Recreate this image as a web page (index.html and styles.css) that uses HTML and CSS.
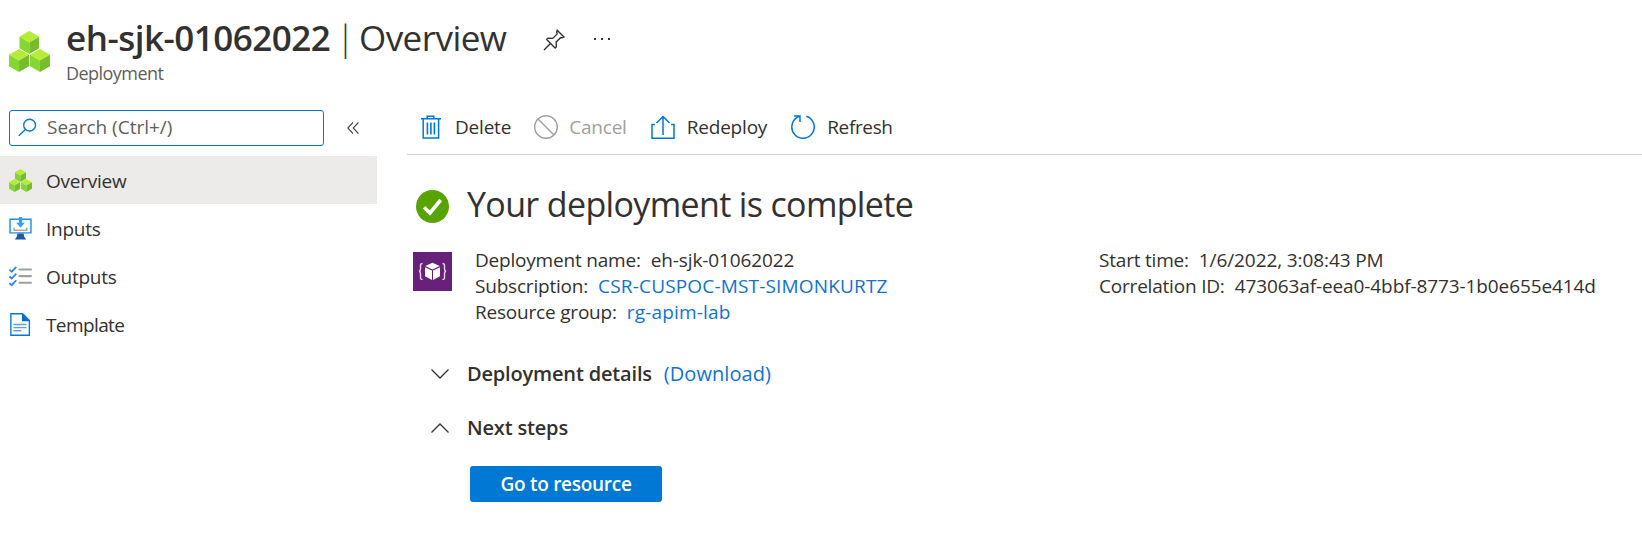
FILE: index.html
```
<!DOCTYPE html>
<html lang="en">
<head>
<meta charset="utf-8">
<title>eh-sjk-01062022 | Overview</title>
<link rel="stylesheet" href="styles.css">
</head>
<body>
<svg class="defs" width="0" height="0" aria-hidden="true">
  <symbol id="cube" viewBox="0 0 20 23">
    <path d="M10 0 20 5.7 10 11.5 0 5.7z" fill="#b4ec36"/>
    <path d="M0 5.7 10 11.5V23L0 17.2z" fill="#86d633"/>
    <path d="M20 5.7 10 11.5V23l10-5.8z" fill="#76bc2d"/>
  </symbol>
  <symbol id="cubes" viewBox="0 0 40 40">
    <use href="#cube" x="10" y="0" width="19.6" height="22.4"/>
    <use href="#cube" x="0" y="17.6" width="19.6" height="22.4"/>
    <use href="#cube" x="20.4" y="17.6" width="19.6" height="22.4"/>
  </symbol>
</svg>
<header class="header">
  <svg class="header-icon" viewBox="0 0 40 40"><use href="#cubes"/></svg>
  <div class="header-text">
    <div class="title-row">
      <h1 class="title"><span class="title-name">eh-sjk-01062022</span><span class="title-bar">|</span><span class="title-view">Overview</span></h1>
      <svg class="pin" viewBox="0 0 22 22"><path d="M14.2 1.2 21 8l-1.8.8-1.4-.3-4.600 4.400.2 4.800-1.300 1.300L3.700 10.600l1.300-1.300 4.700.1 4.500-4.500-.5-2zM7.500 14.500 1 21" fill="none" stroke="#323130" stroke-width="1.400"/></svg>
      <svg class="more" viewBox="0 0 18 4"><path d="M1 1h2v2H1zM8 1h2v2H8zM15 1h2v2h-2z" fill="#323130"/></svg>
    </div>
    <div class="subtitle">Deployment</div>
  </div>
</header>
<div class="body">
  <aside class="sidebar">
    <div class="search-row">
      <div class="search">
        <svg class="search-icon" viewBox="0 0 20 20"><circle cx="12.200" cy="7.500" r="6.200" fill="none" stroke="#0078d4" stroke-width="1.400"/><path d="M7.800 12 .8 18.700" stroke="#0078d4" stroke-width="1.500"/></svg>
        <span class="search-hint">Search (Ctrl+/)</span>
      </div>
      <svg class="collapse" viewBox="0 0 12 12"><path d="M6 .5.8 6 6 11.500M11.400.5 6.200 6l5.200 5.500" fill="none" stroke="#484644" stroke-width="1.100"/></svg>
    </div>
    <nav class="nav">
      <a class="nav-item nav-selected"><svg class="nav-icon" viewBox="0 0 40 40"><use href="#cubes"/></svg><span class="nav-label">Overview</span></a>
      <a class="nav-item"><svg class="nav-icon" viewBox="0 0 22 22"><path d="M1 2.200h20v13H1z" fill="#fff" stroke="#1a93e6" stroke-width="1.400"/><path d="M8 15.700h6l.5 3.300 2 2.500h-11l2-2.500z" fill="#1f58a8"/><path d="M9.400 0h3.200v5.500h2.600L11 10.300 6.800 5.500h2.600z" fill="#3aa0ee"/><path d="M5 10.300v2.400h12v-2.400" fill="none" stroke="#a8a8a8" stroke-width="1.500"/></svg><span class="nav-label">Inputs</span></a>
      <a class="nav-item"><svg class="nav-icon" viewBox="0 0 22 22"><path d="M.4 4.500 2.600 6.500 7 1.800M.4 10.900l2.200 2L7 8.200M.4 17.300l2.200 2L7 14.600" fill="none" stroke="#2a86e0" stroke-width="1.700"/><path d="M10 4.300h11M10 10.600h11M10 17h11" stroke="#a0a0a0" stroke-width="2" stroke-linecap="round"/></svg><span class="nav-label">Outputs</span></a>
      <a class="nav-item"><svg class="nav-icon" viewBox="0 0 22 22"><path d="M1.800.7H13l6.500 6.500v14.100H1.800z" fill="#fff" stroke="#0078d4" stroke-width="1.300"/><path d="M12.400.5 20 8h-7.600z" fill="#0f6cc4"/><path d="M4.200 11.100h12.600M4.200 14h12.600M4.200 17h7.600" stroke="#5ea0ef" stroke-width="1.400"/></svg><span class="nav-label label-tight">Template</span></a>
    </nav>
  </aside>
  <main class="main">
    <div class="toolbar">
      <div class="tool"><svg class="tool-icon" viewBox="0 0 24 24"><path d="M1 3.700h20M7.200 3.500V1.200h6.600v2.300M3.200 4v19h15.400V4" fill="none" stroke="#0078d4" stroke-width="1.500"/><path d="M7.400 7.500v12M10.900 7.500v12M14.400 7.500v12" stroke="#0078d4" stroke-width="1.600"/></svg><span>Delete</span></div>
      <div class="tool tool-off"><svg class="tool-icon" viewBox="0 0 24 24"><g fill="none" stroke="#a19f9d" stroke-width="1.400"><circle cx="12" cy="12" r="11.300"/><path d="M4 4l16 16"/></g></svg><span>Cancel</span></div>
      <div class="tool"><svg class="tool-icon" viewBox="0 0 24 24"><path d="M4 9.500H1v13.700h22V9.500h-3M12 20V1.500M5.500 8 12 1.500 18.500 8" fill="none" stroke="#0078d4" stroke-width="1.500"/></svg><span>Redeploy</span></div>
      <div class="tool"><svg class="tool-icon" viewBox="0 0 24 24"><path d="M15.300 1.300A11.200 11.200 0 1 1 6.600 2.200L8.700 1.100M3 1.100h6v6" fill="none" stroke="#0078d4" stroke-width="1.500"/></svg><span class="tool-refresh">Refresh</span></div>
    </div>
    <div class="status">
      <svg class="status-icon" viewBox="0 0 33 33"><circle cx="16.500" cy="16.500" r="16.500" fill="#57a300"/><path d="M8 17.200l5.900 5.900L24.700 10" fill="none" stroke="#fff" stroke-width="3.600"/></svg>
      <h2 class="status-title">Your deployment is complete</h2>
    </div>
    <div class="summary">
      <svg class="summary-icon" viewBox="0 0 39 39"><path d="M0 0h39v39H0z" fill="#68217a"/><path d="M19.500 10.700l7.200 3.300-7.200 3.400-7.200-3.400zM12 15.200l7 3.200v9.500l-7-3.700zM27 15.200l-7 3.200v9.500l7-3.700z" fill="#fff"/><path d="M9.500 11.500c-2 0-2 .7-2 2v3.300c0 1.500-.4 2.200-1.500 2.400 1.100.2 1.500 1 1.500 2.400v3.800c0 1.400 0 2 2 2M29.500 11.500c2 0 2 .7 2 2v3.300c0 1.500.4 2.200 1.500 2.400-1.100.2-1.500 1-1.500 2.400v3.800c0 1.400 0 2-2 2" fill="none" stroke="#e4d8e8" stroke-width="1.400"/></svg>
      <dl class="facts">
        <div class="fact"><dt>Deployment name:</dt><dd class="fact-name">eh-sjk-01062022</dd></div>
        <div class="fact"><dt>Subscription:</dt><dd class="link fact-link">CSR-CUSPOC-MST-SIMONKURTZ</dd></div>
        <div class="fact"><dt>Resource group:</dt><dd class="link fact-link">rg-apim-lab</dd></div>
      </dl>
      <dl class="facts">
        <div class="fact"><dt>Start time:</dt><dd class="fact-value">1/6/2022, 3:08:43 PM</dd></div>
        <div class="fact"><dt>Correlation ID:</dt><dd class="fact-value">473063af-eea0-4bbf-8773-1b0e655e414d</dd></div>
      </dl>
    </div>
    <div class="section">
      <svg class="chevron" viewBox="0 0 18 10"><path d="M.5.5 9 9 17.500.5" fill="none" stroke="#323130" stroke-width="1.300"/></svg>
      <h3 class="section-title">Deployment details</h3><a class="link download">(Download)</a>
    </div>
    <div class="section">
      <svg class="chevron" viewBox="0 0 18 10"><path d="M.5 9.500 9 1l8.500 8.500" fill="none" stroke="#323130" stroke-width="1.300"/></svg>
      <h3 class="section-title">Next steps</h3>
    </div>
    <button class="button">Go to resource</button>
  </main>
</div>
</body>
</html>
```
FILE: styles.css
```
* { box-sizing: border-box; }
body { margin: 0; background: #fff; color: #323130; font: 400 19px/26px "Open Sans", "Noto Sans", sans-serif; }
h1, h2, h3, dl, dd { margin: 0; font-weight: 400; }
svg { display: block; flex: none; }
.defs { position: absolute; }
span, dt, dd, h2, h3, a { white-space: nowrap; }
.header { display: flex; height: 110px; padding: 13px 0 0 9px; }
.header-icon { width: 41px; height: 41px; margin-top: 18px; }
.header-text { margin-left: 16px; }
.title-row { display: flex; align-items: center; height: 50px; }
.title { display: flex; font-size: 35px; line-height: 50px; }
.title-name { width: 266px; font-weight: 600; letter-spacing: -0.5px; }
.title-bar { width: 27px; text-align: center; font-weight: 300; }
.title-view { width: 148px; letter-spacing: -0.55px; }
.pin { width: 22px; height: 22px; margin: 3px 0 0 36px; }
.more { width: 18px; height: 4px; margin: 2px 0 0 28px; }
.subtitle { font-size: 18px; line-height: 20px; color: #605e5c; letter-spacing: -0.55px; }
.body { display: flex; }
.sidebar { flex: none; width: 377px; }
.search-row { display: flex; align-items: center; padding-left: 9px; height: 36px; }
.search { display: flex; align-items: center; width: 315px; height: 36px; padding: 0 0 2px 8px; border: 1px solid #0078d4; border-radius: 3px; color: #605e5c; }
.search-icon { width: 19px; height: 19px; margin: 1px 10px 0 0; }
.collapse { width: 12px; height: 12px; margin-left: 23px; }
.nav { margin-top: 10px; }
.nav-item { display: flex; align-items: center; height: 48px; padding-left: 9px; }
.nav-selected { background: #edebe9; }
.nav-icon { width: 23px; height: 23px; margin: 1px 14px 0 0; }
.nav-label { padding-top: 2px; letter-spacing: -0.25px; }
.label-tight { letter-spacing: -0.6px; }
.main { flex: 1; min-width: 0; margin-left: 30px; }
.toolbar { display: flex; align-items: center; height: 45px; padding: 0 0 11px 13px; border-bottom: 1px solid #d2d0ce; }
.tool { display: flex; align-items: center; gap: 11px; margin-right: 22px; }
.tool span { padding-top: 1px; letter-spacing: -0.2px; }
.tool:nth-child(n+3) { gap: 12px; margin-right: 24px; }
.tool:nth-child(2) { margin-right: 24px; }
.tool:first-child { margin-right: 23px; }
.tool .tool-refresh { letter-spacing: -0.35px; }
.tool-off { color: #a19f9d; }
.tool-icon { width: 24px; height: 24px; }
.status { display: flex; align-items: center; height: 66px; margin-top: 18px; padding: 0 0 0 9px; }
.status-icon { width: 33px; height: 33px; }
.status-title { margin-left: 18px; padding-bottom: 5px; font-size: 34px; line-height: 50px; letter-spacing: -0.65px; }
.summary { display: flex; padding-left: 6px; height: 92px; margin-top: 8px; }
.summary-icon { width: 39px; height: 39px; margin-top: 5px; }
.facts { width: 624px; margin-left: 23px; }
.facts + .facts { flex: 1; margin-left: 0; }
.fact { display: flex; gap: 10px; }
.fact dt { letter-spacing: -0.2px; }
.fact .fact-name { letter-spacing: -0.12px; }
.fact .fact-link { letter-spacing: 0.17px; }
.fact .fact-value { letter-spacing: -0.1px; }
.link { color: #1072d0; }
.section { display: flex; align-items: center; height: 54px; padding-left: 24px; }
.summary + .section { margin-top: 8px; }
.chevron { width: 18px; height: 10px; margin-right: 18px; }
.section-title { font-size: 20px; font-weight: 600; letter-spacing: -0.17px; margin-right: 12px; }
.download { font-size: 20px; letter-spacing: 0.05px; }
.button { display: block; width: 192px; height: 36px; margin: 11px 0 0 63px; padding: 0; border: 0; border-radius: 3px; background: #0078d4; color: #fff; font: 600 19px/36px "Open Sans", sans-serif; letter-spacing: -0.28px; }
```
